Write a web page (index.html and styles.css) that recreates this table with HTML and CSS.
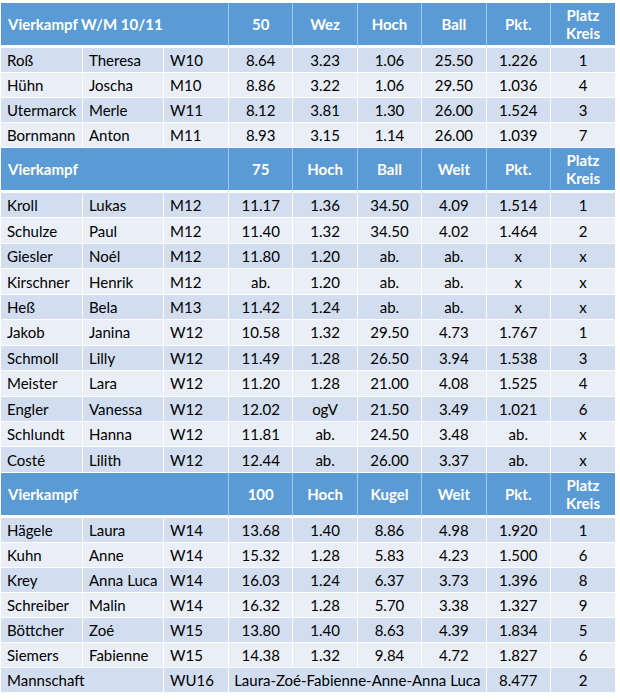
FILE: index.html
```html
<!DOCTYPE html>
<html lang="de">
<head>
<meta charset="utf-8">
<title>Vierkampf</title>
<link rel="stylesheet" href="styles.css">
</head>
<body>
<table class="results">
  <colgroup>
    <col class="c-name"><col class="c-first"><col class="c-class">
    <col class="c-num"><col class="c-num"><col class="c-num"><col class="c-num"><col class="c-num"><col class="c-last">
  </colgroup>
  <tbody class="sec sec-a">
    <tr class="head">
      <th colspan="3" class="title">Vierkampf W/M 10/11</th>
      <th>50</th><th>Wez</th><th>Hoch</th><th>Ball</th><th>Pkt.</th><th>Platz<br>Kreis</th>
    </tr>
    <tr><td>Roß</td><td>Theresa</td><td>W10</td><td>8.64</td><td>3.23</td><td>1.06</td><td>25.50</td><td>1.226</td><td>1</td></tr>
    <tr><td>Hühn</td><td>Joscha</td><td>M10</td><td>8.86</td><td>3.22</td><td>1.06</td><td>29.50</td><td>1.036</td><td>4</td></tr>
    <tr><td>Utermarck</td><td>Merle</td><td>W11</td><td>8.12</td><td>3.81</td><td>1.30</td><td>26.00</td><td>1.524</td><td>3</td></tr>
    <tr><td>Bornmann</td><td>Anton</td><td>M11</td><td>8.93</td><td>3.15</td><td>1.14</td><td>26.00</td><td>1.039</td><td>7</td></tr>
  </tbody>
  <tbody class="sec sec-b">
    <tr class="head">
      <th colspan="3" class="title">Vierkampf</th>
      <th>75</th><th>Hoch</th><th>Ball</th><th>Weit</th><th>Pkt.</th><th>Platz<br>Kreis</th>
    </tr>
    <tr><td>Kroll</td><td>Lukas</td><td>M12</td><td>11.17</td><td>1.36</td><td>34.50</td><td>4.09</td><td>1.514</td><td>1</td></tr>
    <tr><td>Schulze</td><td>Paul</td><td>M12</td><td>11.40</td><td>1.32</td><td>34.50</td><td>4.02</td><td>1.464</td><td>2</td></tr>
    <tr><td>Giesler</td><td>Noél</td><td>M12</td><td>11.80</td><td>1.20</td><td>ab.</td><td>ab.</td><td>x</td><td>x</td></tr>
    <tr><td>Kirschner</td><td>Henrik</td><td>M12</td><td>ab.</td><td>1.20</td><td>ab.</td><td>ab.</td><td>x</td><td>x</td></tr>
    <tr><td>Heß</td><td>Bela</td><td>M13</td><td>11.42</td><td>1.24</td><td>ab.</td><td>ab.</td><td>x</td><td>x</td></tr>
    <tr><td>Jakob</td><td>Janina</td><td>W12</td><td>10.58</td><td>1.32</td><td>29.50</td><td>4.73</td><td>1.767</td><td>1</td></tr>
    <tr><td>Schmoll</td><td>Lilly</td><td>W12</td><td>11.49</td><td>1.28</td><td>26.50</td><td>3.94</td><td>1.538</td><td>3</td></tr>
    <tr><td>Meister</td><td>Lara</td><td>W12</td><td>11.20</td><td>1.28</td><td>21.00</td><td>4.08</td><td>1.525</td><td>4</td></tr>
    <tr><td>Engler</td><td>Vanessa</td><td>W12</td><td>12.02</td><td>ogV</td><td>21.50</td><td>3.49</td><td>1.021</td><td>6</td></tr>
    <tr><td>Schlundt</td><td>Hanna</td><td>W12</td><td>11.81</td><td>ab.</td><td>24.50</td><td>3.48</td><td>ab.</td><td>x</td></tr>
    <tr><td>Costé</td><td>Lilith</td><td>W12</td><td>12.44</td><td>ab.</td><td>26.00</td><td>3.37</td><td>ab.</td><td>x</td></tr>
  </tbody>
  <tbody class="sec sec-c">
    <tr class="head">
      <th colspan="3" class="title">Vierkampf</th>
      <th>100</th><th>Hoch</th><th>Kugel</th><th>Weit</th><th>Pkt.</th><th>Platz<br>Kreis</th>
    </tr>
    <tr><td>Hägele</td><td>Laura</td><td>W14</td><td>13.68</td><td>1.40</td><td>8.86</td><td>4.98</td><td>1.920</td><td>1</td></tr>
    <tr><td>Kuhn</td><td>Anne</td><td>W14</td><td>15.32</td><td>1.28</td><td>5.83</td><td>4.23</td><td>1.500</td><td>6</td></tr>
    <tr><td>Krey</td><td>Anna Luca</td><td>W14</td><td>16.03</td><td>1.24</td><td>6.37</td><td>3.73</td><td>1.396</td><td>8</td></tr>
    <tr><td>Schreiber</td><td>Malin</td><td>W14</td><td>16.32</td><td>1.28</td><td>5.70</td><td>3.38</td><td>1.327</td><td>9</td></tr>
    <tr><td>Böttcher</td><td>Zoé</td><td>W15</td><td>13.80</td><td>1.40</td><td>8.63</td><td>4.39</td><td>1.834</td><td>5</td></tr>
    <tr><td>Siemers</td><td>Fabienne</td><td>W15</td><td>14.38</td><td>1.32</td><td>9.84</td><td>4.72</td><td>1.827</td><td>6</td></tr>
    <tr><td colspan="2">Mannschaft</td><td>WU16</td><td colspan="4" class="team">Laura-Zoé-Fabienne-Anne-Anna Luca</td><td>8.477</td><td>2</td></tr>
  </tbody>
</table>
</body>
</html>
```

FILE: styles.css
```css
html, body {
  margin: 0;
  padding: 0;
  background: #ffffff;
}

body {
  padding: 3px 0 0 1px;
  font-family: Lato, "Open Sans", "Liberation Sans", sans-serif;
  font-size: 15px;
  color: #000000;
}

.results {
  border-collapse: separate;
  border-spacing: 0;
  table-layout: fixed;
  width: 616px;
}

.c-name { width: 82px; }
.c-first { width: 81px; }
.c-class { width: 65px; }
.c-num { width: 64.4px; }
.c-last { width: 66px; }

.results tr { height: 25px; }
.results .sec-b tr { height: 25.45px; }
.results tr.head { height: 45px; }

.results td,
.results th {
  padding: 0 3px;
  text-align: center;
  vertical-align: middle;
  white-space: nowrap;
  overflow: hidden;
  line-height: 18px;
}

.results td {
  border-bottom: 1px solid #ffffff;
  border-right: 1px solid #ffffff;
}

.results td:nth-child(-n+3) {
  text-align: left;
  padding-left: 6px;
}

.results td.team {
  text-align: center;
  padding: 0;
}

.results tr:nth-child(even) td { background: #d2deef; }
.results tr:nth-child(odd) td { background: #eaeff7; }

.results tr.head th {
  background: #5b9bd5;
  color: #ffffff;
  font-weight: 700;
  border-right: 1px solid #a5c7e9;
  border-bottom: 3px solid #ffffff;
}

.results tr.head th:last-child,
.results td:last-child {
  border-right: 2px solid #ffffff;
}

.results tr.head th.title {
  text-align: left;
  padding-left: 7px;
}
```
